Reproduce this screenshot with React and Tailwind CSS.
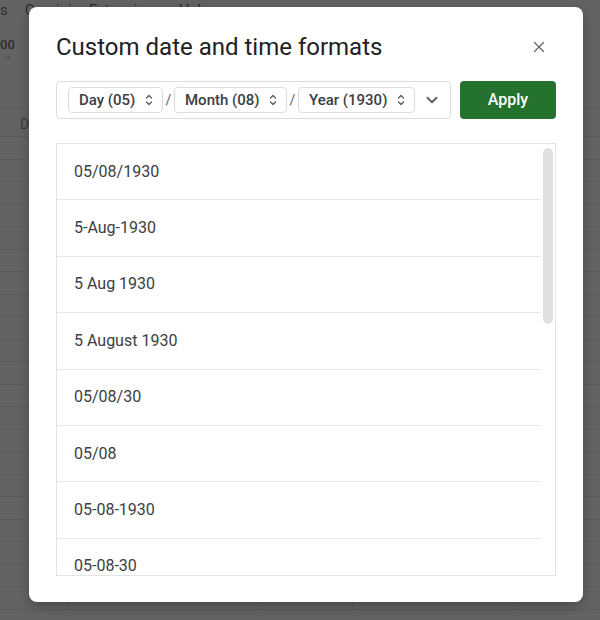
import { X, ChevronDown } from 'lucide-react'

const formats = [
  '05/08/1930',
  '5-Aug-1930',
  '5 Aug 1930',
  '5 August 1930',
  '05/08/30',
  '05/08',
  '05-08-1930',
  '05-08-30',
]

const parts = [
  { label: 'Day (05)', w: 'w-[95px]' },
  { label: 'Month (08)', w: 'w-[113px]' },
  { label: 'Year (1930)', w: 'w-[117px]' },
]

function UpDown() {
  return (
    <svg width="8" height="12" viewBox="0 0 8 12" fill="none" stroke="#5f6368" strokeWidth="1.4" strokeLinecap="round" strokeLinejoin="round">
      <path d="M1.5 4 L4 1.5 L6.5 4" />
      <path d="M1.5 8 L4 10.5 L6.5 8" />
    </svg>
  )
}

function Sheet() {
  const rows = Array.from({ length: 21 })
  return (
    <div className="w-[600px] h-[620px] bg-[#636363] overflow-hidden text-[#2e2e2e]" style={{ fontFamily: 'Roboto, "Liberation Sans", sans-serif' }}>
      {/* menu bar */}
      <div className="h-[20px] flex items-center gap-[17px] text-[15px] leading-[18px]">
        <span>s</span>
        <span>Gemini</span>
        <span>Extensions</span>
        <span>Help</span>
      </div>
      {/* toolbar */}
      <div className="h-[88px] border-b border-[#585858] pt-[18px] font-medium">
        <div className="text-[13px] leading-[14px]">00</div>
        <div className="text-[9px] leading-[8px] pl-[3px]">→</div>
      </div>
      {/* column header */}
      <div className="h-[29px] border-b border-[#585858] flex">
        <div className="w-[68px] pl-[20px] pt-[6px] text-[14px] text-[#3a3a3a]">D</div>
      </div>
      {rows.map((_, i) => (
        <div key={i} className="h-[22.5px] border-b border-[#5a5a5a] flex">
          <div className="w-[68px] border-r border-[#5a5a5a]" />
          <div className="w-[190px] border-r border-[#5a5a5a]" />
          <div className="w-[95px] border-r border-[#5a5a5a]" />
          <div className="w-[162px] border-r border-[#5a5a5a]" />
        </div>
      ))}
    </div>
  )
}

export default function App() {
  return (
    <div className="relative w-[600px] h-[620px] overflow-hidden" style={{ fontFamily: 'Roboto, "Liberation Sans", sans-serif' }}>
      <Sheet />

      <div className="absolute left-[29px] top-[7px] w-[554px] h-[595px] rounded-[8px] bg-white shadow-[0_4px_12px_rgba(0,0,0,0.25)] px-[27px] pt-[26px] flex flex-col">
        <div className="h-[28px] flex items-center justify-between">
          <h1 className="text-[24px] leading-[28px] text-[#202124]">Custom date and time formats</h1>
          <button className="mr-[8px] text-[#5f6368]">
            <X className="h-[18px] w-[18px]" strokeWidth={1.6} />
          </button>
        </div>

        <div className="mt-[20px] flex gap-[9px]">
          <div className="w-[395px] h-[38px] border border-[#dadce0] rounded-[4px] flex items-center pl-[11px]">
            {parts.map((p, i) => (
              <div key={p.label} className="flex items-center">
                {i > 0 && <span className="w-[11px] text-center text-[14px] text-[#5f6368]">/</span>}
                <div className={`${p.w} h-[26px] border border-[#dadce0] rounded-[4px] flex items-center justify-between pl-[10px] pr-[9px]`}>
                  <span className="text-[15px] font-medium text-[#3c4043]">{p.label}</span>
                  <UpDown />
                </div>
              </div>
            ))}
            <ChevronDown className="ml-[8px] h-[18px] w-[18px] text-[#5f6368]" strokeWidth={2.6} />
          </div>
          <button className="w-[96px] h-[38px] rounded-[4px] bg-[#25722f] text-white text-[16px] font-medium">
            Apply
          </button>
        </div>

        <div className="mt-[24px] h-[433px] border border-[#e3e3e3] flex overflow-hidden">
          <div className="w-[484px]">
            {formats.map((f) => (
              <div key={f} className="h-[56.4px] border-b border-[#e8e8e8] flex items-center pl-[17px] text-[16px] text-[#3c4043]">
                {f}
              </div>
            ))}
          </div>
          <div className="flex-1 flex justify-center pt-[4px]">
            <div className="w-[10px] h-[176px] rounded-full bg-[#dfe0e0]" />
          </div>
        </div>
      </div>
    </div>
  )
}
